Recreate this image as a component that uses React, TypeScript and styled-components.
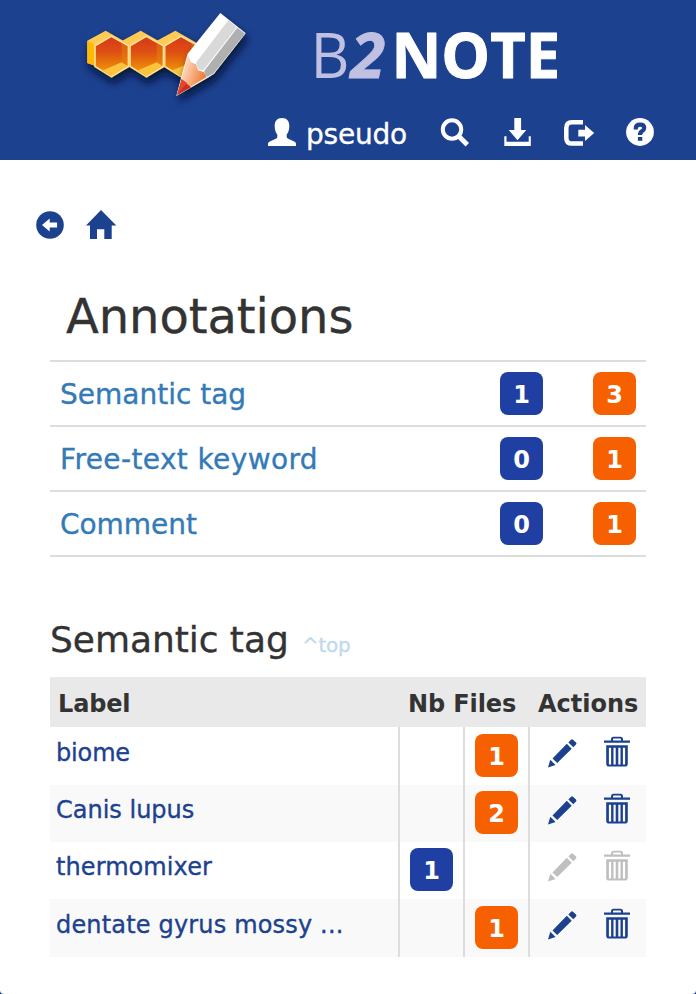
import React from 'react';
import styled, { createGlobalStyle, css } from 'styled-components';

const NAVY = '#1c418f';

const GlobalStyle = createGlobalStyle`
  *, *::before, *::after { box-sizing: border-box; }
  html, body { margin: 0; padding: 0; background: ${NAVY}; }
  body { font-family: "DejaVu Sans", Verdana, sans-serif; color: #333; }
`;

const Page = styled.div`
  width: 696px;
  height: 994px;
  overflow: hidden;
  background: #fff;
  border-radius: 0 0 4px 4px;
`;

const Header = styled.header`
  height: 160px;
  background: ${NAVY};
`;

const Brand = styled.div`
  display: flex;
  height: 110px;
  padding-left: 70px;
  gap: 30px;
`;

const Mark = styled.svg`
  width: 200px;
  height: 110px;
  flex: none;
`;

const Wordmark = styled.svg`
  width: 270px;
  height: 110px;
  flex: none;
`;

const Toolbar = styled.nav`
  display: flex;
  align-items: flex-start;
  padding: 7px 41px 0 267px;
  color: #fff;
`;

const Tool = styled.a<{ $gap?: number }>`
  display: block;
  height: 30px;
  margin-left: ${(p) => p.$gap ?? 0}px;
  color: inherit;
`;

/* Slightly emboldens regular-weight text. */
const sturdy = css`
  -webkit-text-stroke: 0.35px currentColor;
`;

const UserName = styled.span`
  ${sturdy}
  width: 102px;
  margin-left: 8px;
  font-size: 28px;
  line-height: 35px;
  letter-spacing: -0.2px;
  white-space: nowrap;
`;

const Glyph = styled.svg`
  display: block;
  fill: currentColor;
`;

const Crumbs = styled.nav`
  display: flex;
  gap: 21px;
  height: 116px;
  padding: 50px 0 0 35px;
  color: ${NAVY};
`;

const Content = styled.main`
  width: 596px;
  margin-left: 50px;
`;

const Title = styled.h1`
  ${sturdy}
  margin: 0;
  padding-left: 16px;
  height: 84px;
  font-size: 48px;
  font-weight: 400;
  line-height: 80px;
  letter-spacing: -0.08px;
`;

const Summary = styled.section`
  border-bottom: 2px solid #ddd;
`;

const SummaryRow = styled.div`
  display: flex;
  align-items: center;
  height: 65px;
  padding: 0 10px;
  border-top: 2px solid #ddd;
`;

const SummaryLink = styled.a<{ $track?: number }>`
  ${sturdy}
  flex: 1;
  padding-top: 2px;
  color: #337ab7;
  font-size: 28px;
  line-height: 44px;
  letter-spacing: ${(p) => p.$track ?? 0}px;
`;

const Badge = styled.span<{ $tone: 'blue' | 'orange' }>`
  display: block;
  width: 43px;
  height: 43px;
  border-radius: 8px;
  background: ${(p) => (p.$tone === 'blue' ? '#203fa3' : '#f66000')};
  color: #fff;
  font-size: 24px;
  font-weight: 700;
  line-height: 46px;
  text-align: center;
`;

const Counts = styled.div`
  display: flex;
  gap: 50px;
`;

const SectionHead = styled.div`
  display: flex;
  align-items: baseline;
  height: 120px;
  padding-top: 57px;
`;

const SectionTitle = styled.h2`
  ${sturdy}
  width: 252px;
  margin: 0;
  font-size: 36px;
  font-weight: 400;
  line-height: 51px;
  letter-spacing: -0.05px;
  white-space: nowrap;
`;

const TopLink = styled.a`
  ${sturdy}
  color: #c2d9ec;
  font-size: 20px;
  letter-spacing: -0.3px;
`;

const columns = css`
  display: grid;
  grid-template-columns: 348px 65px 65px 118px;
`;

const HeadRow = styled.div`
  ${columns}
  height: 50px;
  background: #e9e9e9;
  font-size: 24px;
  font-weight: 700;
  line-height: 55px;
  white-space: nowrap;
`;

const HeadCell = styled.div<{ $span?: number; $pad: number; $track: number }>`
  grid-column: span ${(p) => p.$span ?? 1};
  padding-left: ${(p) => p.$pad}px;
  letter-spacing: ${(p) => p.$track}px;
`;

const Row = styled.div<{ $tall?: boolean }>`
  ${columns}
  height: ${(p) => (p.$tall ? 58 : 57)}px;
  &:nth-child(odd) { background: #f9f9f9; }
`;

const Label = styled.a<{ $track?: number; $low?: boolean }>`
  ${sturdy}
  padding-left: 6px;
  color: ${NAVY};
  font-size: 24px;
  line-height: ${(p) => (p.$low ? 53 : 51)}px;
  letter-spacing: ${(p) => p.$track ?? 0}px;
  white-space: nowrap;
`;

const CountCell = styled.div<{ $low?: boolean }>`
  padding: ${(p) => (p.$low ? 7 : 6)}px 0 0 10px;
  border-left: 2px solid #ddd;
`;

const Actions = styled.div<{ $disabled?: boolean; $low?: boolean }>`
  display: flex;
  gap: 27px;
  padding: ${(p) => (p.$low ? 9 : 8)}px 0 0 18px;
  border-left: 2px solid #ddd;
  color: ${(p) => (p.$disabled ? '#bfbfbf' : NAVY)};
`;

const PencilIcon = () => (
  <Glyph width="29" height="32" viewBox="0 -3 29 32">
    <path d="M0 28.4 2.3 20.8 7.6 26.1zM4.5 19.4 18.8 4.8 23.7 9.7 9.2 24.1zM20.4 3.4 23 .7Q24-.2 25 .7L28 3.6Q28.9 4.6 28 5.5L25.3 8.3z" />
  </Glyph>
);

const TrashIcon = () => (
  <Glyph width="26" height="31" viewBox="0 0 26 31">
    <path d="M0 4.5h7V3.2Q7 .7 9.5.7h7Q19 .7 19 3.2v1.3h7v2.3H0zm9 0h8V3.5q0-.9-.9-.9H9.9q-.9 0-.9.9z" />
    <path
      fillRule="evenodd"
      d="M2.2 9.2h21.6v18.6q0 2.8-2.8 2.8H5q-2.8 0-2.8-2.8zM4.9 11.7v16.8h2.2V11.7zm4.6 0v16.8h2.2V11.7zm4.8 0v16.8h2.2V11.7zm4.6 0v16.8h2.2V11.7z"
    />
  </Glyph>
);

const UserIcon = () => (
  <Glyph width="31" height="30" viewBox="-1 -1 31 30">
    <path d="M14 0c5 0 7.3 3.2 7.3 8 0 4-1 6.700-2.600 8.400v2.400c0 1 .5 1.500 1.500 1.900l6 2.900c1.200.5 1.800 1.300 1.800 2.400v2H0v-2c0-1.100.6-1.900 1.800-2.400l6-2.900c1-.4 1.500-.9 1.500-1.900v-2.400C7.700 14.700 6.700 12 6.700 8 6.700 3.200 9 0 14 0z" />
  </Glyph>
);

const SearchIcon = () => (
  <Glyph width="30" height="30" viewBox="440 117 30 30">
    <g fill="none" stroke="currentColor">
      <circle cx="452" cy="129.5" r="9.200" strokeWidth="4" />
      <path d="m459 136.500 8.300 8.300" strokeWidth="4.800" />
    </g>
  </Glyph>
);

const DownloadIcon = () => (
  <Glyph width="28" height="30" viewBox="504 117 28 30">
    <path d="M514.3 118h6.800v12h5.200l-8.800 10.300-8.800-10.300h5.600zM504.300 136.300h2.200v5.400h22.200v-5.400h2.100V146h-26.500z" />
  </Glyph>
);

const LogoutIcon = () => (
  <Glyph width="32" height="30" viewBox="563 117 32 30">
    <path
      d="M583 122.200h-11q-5.700 0-5.700 5.700v10q0 5.700 5.700 5.700h11"
      fill="none"
      stroke="currentColor"
      strokeWidth="4.500"
    />
    <path d="M578.300 129.700h6.700v-4.600l9.200 8-9.200 8v-4.700h-6.700z" />
  </Glyph>
);

const HelpIcon = () => (
  <Glyph width="30" height="30" viewBox="625 117 30 30">
    <circle cx="640" cy="132" r="13.900" />
    <path
      d="M635.800 129.400v-1.100q0-3.600 4.200-3.600t4.200 3.300q0 1.700-2.100 3.100-2.100 1.300-2.100 4"
      fill="none"
      stroke={NAVY}
      strokeWidth="4.200"
    />
    <path d="M637.900 137h4.400v3.800h-4.400z" fill={NAVY} />
  </Glyph>
);

const BackIcon = () => (
  <Glyph width="30" height="30" viewBox="35 210 30 30">
    <circle cx="50" cy="225" r="13.800" />
    <path d="m42 225 7.700-6.500v4h7.400v5h-7.400v4z" fill="#fff" />
  </Glyph>
);

const HomeIcon = () => (
  <Glyph width="31" height="30" viewBox="86 210 31 30">
    <path d="m101 210 15.300 15.400h-4.600V239h-7.400v-9.700H97V239h-7v-13.600h-4z" />
  </Glyph>
);

const HoneycombCell = ({ x }: { x: number }) => (
  <g transform={`translate(${x} 0)`}>
    <path d="m52 122 55-30 71 41v68l-54 30-54-36-18-6z" fill="#ffca52" />
    <path d="m52 122 23 14v61l-23-8z" fill="#ffb900" />
    <path
      d="m124 109 51 28v62l-51 31-49-31v-62z"
      fill="url(#cell)"
      stroke="#ffe092"
      strokeWidth="5"
      strokeLinejoin="round"
    />
    <path d="m155 129 17 10v56l-17-9z" fill="#e8820c" opacity=".5" />
    <path d="m96 212 59-25 17 10-48 31z" fill="#fcc33c" />
  </g>
);

const BrandMark = () => (
  <Mark viewBox="0 0 600 330">
    <defs>
      <linearGradient id="cell" x1="0" y1="0" x2="0" y2="1">
        <stop offset="0" stopColor="#d7371a" />
        <stop offset=".4" stopColor="#dd5112" />
        <stop offset=".85" stopColor="#ee9208" />
      </linearGradient>
      <linearGradient id="wood" x1="0" y1=".2" x2="1" y2=".7">
        <stop offset=".15" stopColor="#ffe4cf" />
        <stop offset="1" stopColor="#ee6a1c" />
      </linearGradient>
      <filter id="shade" x="-20%" y="-20%" width="140%" height="150%">
        <feDropShadow dx="6" dy="17" stdDeviation="12" floodColor="#04102c" floodOpacity=".85" />
      </filter>
    </defs>
    <g filter="url(#shade)">
      <HoneycombCell x={209} />
      <HoneycombCell x={105} />
      <HoneycombCell x={0} />
    </g>
    <g filter="url(#shade)">
      <path d="m451 39 76 61-95 121-19 12-94 55 34-127z" fill="#fff" />
      <path d="m354 166 9 21 15 6 6 18 17 5 9 15-89 54z" fill="url(#wood)" />
      <path d="m335 238 28 24-42 24z" fill="#cf2f1c" />
      <path d="m335 238 16 11-29 34z" fill="#e3472a" />
      <path d="m475 61 25 21-99 127q-10 3-17-4-5-11-6-17z" fill="#d9d9d9" />
      <path d="m502 83 23 18-94 119-19 10q-10-5-9-18z" fill="#b0b0b0" />
    </g>
  </Mark>
);

const NameMark = () => (
  <Wordmark viewBox="300 0 270 110">
    <g fontSize="63">
      <text x="310.500" y="78" fill="#c0c0e2" fontFamily="Open Sans" fontWeight="400" textLength="39" lengthAdjust="spacingAndGlyphs">B</text>
      <text x="350.500" y="78" fill="#c0c0e2" stroke="#c0c0e2" strokeWidth=".8" fontFamily="Open Sans" fontWeight="700" fontStyle="italic">2</text>
      <text x="391.500" y="78" fill="#fff" stroke="#fff" strokeWidth="1" strokeLinejoin="round" fontFamily="Open Sans" fontWeight="700" textLength="168.500" lengthAdjust="spacingAndGlyphs">NOTE</text>
    </g>
  </Wordmark>
);

const summary = [
  { name: 'Semantic tag', mine: 1, all: 3, track: 0 },
  { name: 'Free-text keyword', mine: 0, all: 1, track: 0.38 },
  { name: 'Comment', mine: 0, all: 1, track: -0.05 },
];

type Tag = { label: string; mine?: number; others?: number; tall?: boolean; low?: boolean; track?: number };

const tags: Tag[] = [
  { label: 'biome', others: 1, tall: true, low: true, track: -0.15 },
  { label: 'Canis lupus', others: 2 },
  { label: 'thermomixer', mine: 1, track: 0.08 },
  { label: 'dentate gyrus mossy ...', others: 1, tall: true, low: true, track: 0.17 },
];

export default function App() {
  return (
    <>
      <GlobalStyle />
      <Page>
        <Header>
          <Brand>
            <BrandMark />
            <NameMark />
          </Brand>
          <Toolbar>
            <Tool><UserIcon /></Tool>
            <UserName>pseudo</UserName>
            <Tool $gap={33}><SearchIcon /></Tool>
            <Tool $gap={34}><DownloadIcon /></Tool>
            <Tool $gap={31}><LogoutIcon /></Tool>
            <Tool $gap={30}><HelpIcon /></Tool>
          </Toolbar>
        </Header>
        <Crumbs>
          <BackIcon />
          <HomeIcon />
        </Crumbs>
        <Content>
          <Title>Annotations</Title>
          <Summary>
            {summary.map((s) => (
              <SummaryRow key={s.name}>
                <SummaryLink $track={s.track}>{s.name}</SummaryLink>
                <Counts>
                  <Badge $tone="blue">{s.mine}</Badge>
                  <Badge $tone="orange">{s.all}</Badge>
                </Counts>
              </SummaryRow>
            ))}
          </Summary>
          <SectionHead>
            <SectionTitle>Semantic tag</SectionTitle>
            <TopLink>^top</TopLink>
          </SectionHead>
          <div>
            <HeadRow>
              <HeadCell $pad={8} $track={-0.15}>Label</HeadCell>
              <HeadCell $span={2} $pad={10} $track={-0.12}>Nb Files</HeadCell>
              <HeadCell $pad={10} $track={0}>Actions</HeadCell>
            </HeadRow>
            {tags.map((t) => (
              <Row key={t.label} $tall={t.tall}>
                <Label $track={t.track} $low={t.low}>{t.label}</Label>
                <CountCell $low={t.low}>{t.mine !== undefined && <Badge $tone="blue">{t.mine}</Badge>}</CountCell>
                <CountCell $low={t.low}>{t.others !== undefined && <Badge $tone="orange">{t.others}</Badge>}</CountCell>
                <Actions $disabled={t.mine !== undefined} $low={t.low}>
                  <PencilIcon />
                  <TrashIcon />
                </Actions>
              </Row>
            ))}
          </div>
        </Content>
      </Page>
    </>
  );
}
